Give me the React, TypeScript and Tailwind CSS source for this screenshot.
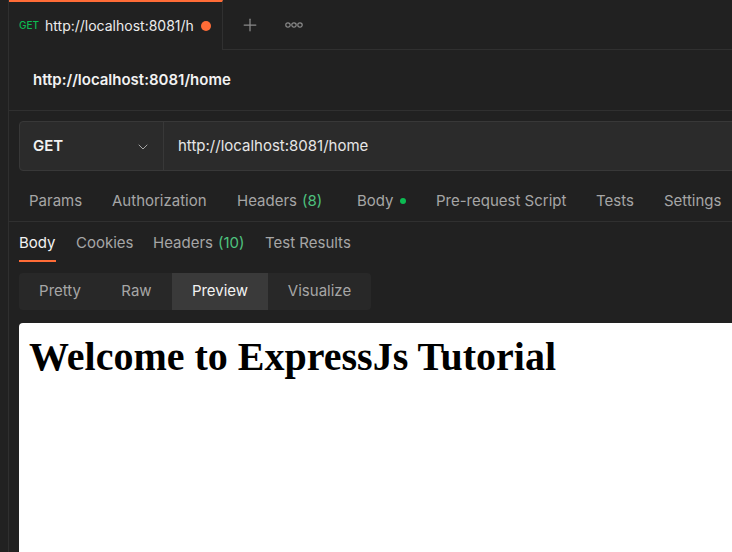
import { ChevronDown, Plus } from 'lucide-react';

const requestTabs = [
  { label: 'Params', w: 'w-[83px]' },
  { label: 'Authorization', w: 'w-[125px]' },
  { label: 'Headers', count: '(8)', w: 'w-[120px]' },
  { label: 'Body', dot: true, w: 'w-[79px]' },
  { label: 'Pre-request Script', w: 'w-[160px]' },
  { label: 'Tests', w: 'w-[68px]' },
  { label: 'Settings', w: 'w-[80px]' },
];

const responseTabs = [
  { label: 'Body', active: true, w: 'w-[57px]' },
  { label: 'Cookies', w: 'w-[77px]' },
  { label: 'Headers', count: '(10)', w: 'w-[112px]' },
  { label: 'Test Results', w: 'w-[100px]' },
];

const modes = [
  { label: 'Pretty', w: 'w-[82px]' },
  { label: 'Raw', w: 'w-[71px]' },
  { label: 'Preview', w: 'w-[96px]', active: true },
  { label: 'Visualize', w: 'w-[103px]' },
];

export default function App() {
  return (
    <div
      className="flex h-[552px] w-[732px] overflow-hidden bg-[#212121] text-[15px] text-[#a6a6a6]"
      style={{ fontFamily: 'Inter, "Noto Sans", sans-serif' }}
    >
      {/* sidebar edge */}
      <div className="w-[9px] shrink-0 border-r border-[#2f2f2f]" />

      <div className="flex min-w-0 flex-1 flex-col">
        {/* open tabs */}
        <div className="flex h-[50px] shrink-0">
          <div className="flex w-[214px] shrink-0 items-center border-t-2 border-r border-[#ff6c37] border-r-[#303030] pl-[10px] pb-[1px]">
            <span className="text-[10px] font-medium text-[#0cbb52]">GET</span>
            <span className="ml-[6px] text-[14px] text-[#ececec]">http://localhost:8081/h</span>
            <span className="ml-[7px] h-[10px] w-[10px] rounded-full bg-[#ff6c37]" />
          </div>
          <div className="flex flex-1 items-center border-b border-[#303030] pl-[17px]">
            <Plus size={20} strokeWidth={1.5} className="text-[#8a8a8a]" />
            <svg width="18" height="6" viewBox="0 0 18 6" className="ml-[25px]">
              <circle cx="3" cy="3" r="2.2" fill="none" stroke="#8a8a8a" strokeWidth="1.2" />
              <circle cx="9" cy="3" r="2.2" fill="none" stroke="#8a8a8a" strokeWidth="1.2" />
              <circle cx="15" cy="3" r="2.2" fill="none" stroke="#8a8a8a" strokeWidth="1.2" />
            </svg>
          </div>
        </div>

        {/* request name */}
        <div className="flex h-[61px] shrink-0 items-center border-b border-[#303030] pl-6">
          <span className="font-semibold text-[#f2f2f2]">http://localhost:8081/home</span>
        </div>

        {/* url bar */}
        <div className="shrink-0 pl-[10px] pt-[10px]">
          <div className="flex h-[50px] w-[800px] rounded-l-[4px] border border-[#383838] bg-[#2b2b2b]">
            <div className="flex w-[144px] items-center justify-between border-r border-[#383838] pt-[1px] pr-[12px] pl-[13px]">
              <span className="font-semibold text-[#f2f2f2]">GET</span>
              <ChevronDown size={16} strokeWidth={1.5} className="text-[#a6a6a6]" />
            </div>
            <div className="flex items-center pt-[1px] pl-[14px] text-[#e6e6e6]">http://localhost:8081/home</div>
          </div>
        </div>

        {/* request tabs */}
        <div className="flex h-[51px] shrink-0 border-b border-[#303030] pl-[20px] pt-[20px] whitespace-nowrap">
          {requestTabs.map((t) => (
            <div key={t.label} className={`flex h-[20px] shrink-0 items-center ${t.w}`}>
              <span>{t.label}</span>
              {t.count && <span className="ml-[5px] text-[#4ec27f]">{t.count}</span>}
              {t.dot && <span className="ml-[6px] h-[6px] w-[6px] rounded-full bg-[#0cbb52]" />}
            </div>
          ))}
        </div>

        {/* response tabs */}
        <div className="flex h-[40px] shrink-0 pl-[10px] pt-[10px] whitespace-nowrap">
          {responseTabs.map((t) => (
            <div key={t.label} className={`shrink-0 ${t.w}`}>
              <span
                className={
                  t.active
                    ? 'inline-block h-[30px] border-b-2 border-[#ff6c37] text-[#f2f2f2]'
                    : 'inline-block h-[30px]'
                }
              >
                {t.label}
                {t.count && <span className="ml-[5px] text-[#4ec27f]">{t.count}</span>}
              </span>
            </div>
          ))}
        </div>

        {/* view modes */}
        <div className="shrink-0 pl-[10px] pt-[11px]">
          <div className="flex h-[37px] w-fit overflow-hidden rounded-[4px] bg-[#282828]">
            {modes.map((m) => (
              <div
                key={m.label}
                className={
                  m.active
                    ? `flex items-center justify-center bg-[#3a3a3a] text-[#f2f2f2] ${m.w}`
                    : `flex items-center justify-center ${m.w}`
                }
              >
                {m.label}
              </div>
            ))}
          </div>
        </div>

        {/* preview */}
        <div className="mt-[13px] ml-[10px] flex-1 rounded-tl-[4px] bg-white pl-[10px] pt-[11px]">
          <h1
            className="text-[40px] leading-[1.15] font-bold whitespace-nowrap text-black"
            style={{ fontFamily: '"Liberation Serif", "Times New Roman", serif' }}
          >
            Welcome to ExpressJs Tutorial
          </h1>
        </div>
      </div>
    </div>
  );
}
